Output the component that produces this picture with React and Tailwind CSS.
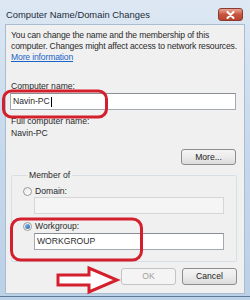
import React from "react";

function Radio({ checked }) {
  return (
    <span className="flex h-[9px] w-[9px] shrink-0 items-center justify-center rounded-full border border-[#9a9a9a] bg-gradient-to-br from-[#e8e8e8] to-[#ffffff]">
      {checked && (
        <span className="h-[5px] w-[5px] rounded-full bg-gradient-to-br from-[#8fc2f0] to-[#1d5fa8]" />
      )}
    </span>
  );
}

export default function App() {
  const font = "font-['Liberation_Sans',Arial,sans-serif]";
  return (
    <div
      className={`relative flex h-[300px] w-[250px] flex-col overflow-hidden bg-gradient-to-b from-[#dde8f3] via-[#c6d8eb] to-[#bcd0e6] ${font} text-[8.6px] text-[#2a2a2a]`}
    >
      {/* Title bar */}
      <div className="flex h-[24px] shrink-0 items-start justify-between pl-[6px] pr-[7px]">
        <span className="pt-[8px] text-[9.4px] leading-[14px] text-[#1e2d3c]">
          Computer Name/Domain Changes
        </span>
        <span className="mt-[8px] flex h-[13px] w-[25px] items-center justify-center rounded-[3px] border border-[#8a3a30] bg-gradient-to-b from-[#e8a593] via-[#c9543e] to-[#b8442c]">
          <svg width="9" height="8" viewBox="0 0 9 8">
            <path d="M1.5 1 L7.5 7 M7.5 1 L1.5 7" stroke="#ffffff" strokeWidth="2" strokeLinecap="round" />
          </svg>
        </span>
      </div>

      {/* Client area */}
      <div className="mx-[5px] flex h-[270px] flex-col border border-[#a9bdd2] bg-[#f0f0f0] pl-[4px]">
        <div className="ml-[1px] pt-[5px] leading-[11px] tracking-[-0.15px]">
          <div>You can change the name and the membership of this</div>
          <div>computer. Changes might affect access to network resources.</div>
          <div className="text-[#1a64c8] underline">More information</div>
        </div>

        <div className="ml-[1px] mt-[18px] leading-[11px]">Computer name:</div>
        <div className="mt-[1px] flex h-[17px] w-[226px] items-center border border-[#a4a8b0] border-t-[#8a8e96] bg-white pl-[2px] leading-[11px]">
          Navin-PC<span className="ml-[1px] h-[10px] w-px bg-black" />
        </div>

        <div className="ml-[1px] mt-[6px] leading-[11px]">Full computer name:</div>
        <div className="ml-[1px] mt-[1px] leading-[11px]">Navin-PC</div>

        <div className="mt-[10px] flex w-[226px] justify-end">
          <button className="flex h-[16px] w-[55px] items-center justify-center rounded-[3px] border border-[#8d8d8d] bg-gradient-to-b from-[#f4f4f4] via-[#ebebeb] to-[#dcdcdc] leading-[11px] text-[#1e1e1e]">
            More...
          </button>
        </div>

        <fieldset className="mt-[5px] ml-[1px] w-[226px] rounded-[2px] border border-[#d5dfe5] pb-[11px] pl-[11px]">
          <legend className="ml-[4px] px-[2px] leading-[11px]">Member of</legend>
          <div className="mt-[5px] flex h-[11px] items-center gap-[3px] leading-[11px]">
            <Radio />
            <span>Domain:</span>
          </div>
          <div className="ml-[11px] h-[17px] w-[190px] border border-[#d6d6d6] bg-[#f5f5f5]" />
          <div className="mt-[7px] flex h-[11px] items-center gap-[3px] leading-[11px]">
            <Radio checked />
            <span>Workgroup:</span>
          </div>
          <div className="ml-[11px] mt-[1px] flex h-[17px] w-[190px] items-center border border-[#a4a8b0] border-t-[#8a8e96] bg-white pl-[2px] leading-[11px]">
            WORKGROUP
          </div>
        </fieldset>

        <div className="mt-[6px] flex w-[227px] justify-end gap-[6px]">
          <button className="flex h-[17px] w-[55px] items-center justify-center rounded-[3px] border border-[#c4c4c4] bg-[#f4f4f4] leading-[11px] text-[#a0a0a0]">
            OK
          </button>
          <button className="flex h-[17px] w-[55px] items-center justify-center rounded-[3px] border border-[#8d8d8d] bg-gradient-to-b from-[#f4f4f4] via-[#ebebeb] to-[#dcdcdc] leading-[11px] text-[#1e1e1e]">
            Cancel
          </button>
        </div>
      </div>
      <div className="mt-[2px] h-px w-full bg-[#5f7a98]" />

      {/* Annotations */}
      <svg className="pointer-events-none absolute left-0 top-0" width="250" height="300" viewBox="0 0 250 300">
        <rect x="3.5" y="91" width="103" height="26" rx="8" fill="none" stroke="#d3202c" strokeWidth="3" />
        <rect x="11.5" y="219" width="130" height="41" rx="9" fill="none" stroke="#d3202c" strokeWidth="3" />
        <path d="M58 275 L89 275 L89 268 L117 280 L89 292 L89 285 L58 285 Z" fill="#ffffff" stroke="#d3202c" strokeWidth="3" strokeLinejoin="miter" />
      </svg>
    </div>
  );
}
